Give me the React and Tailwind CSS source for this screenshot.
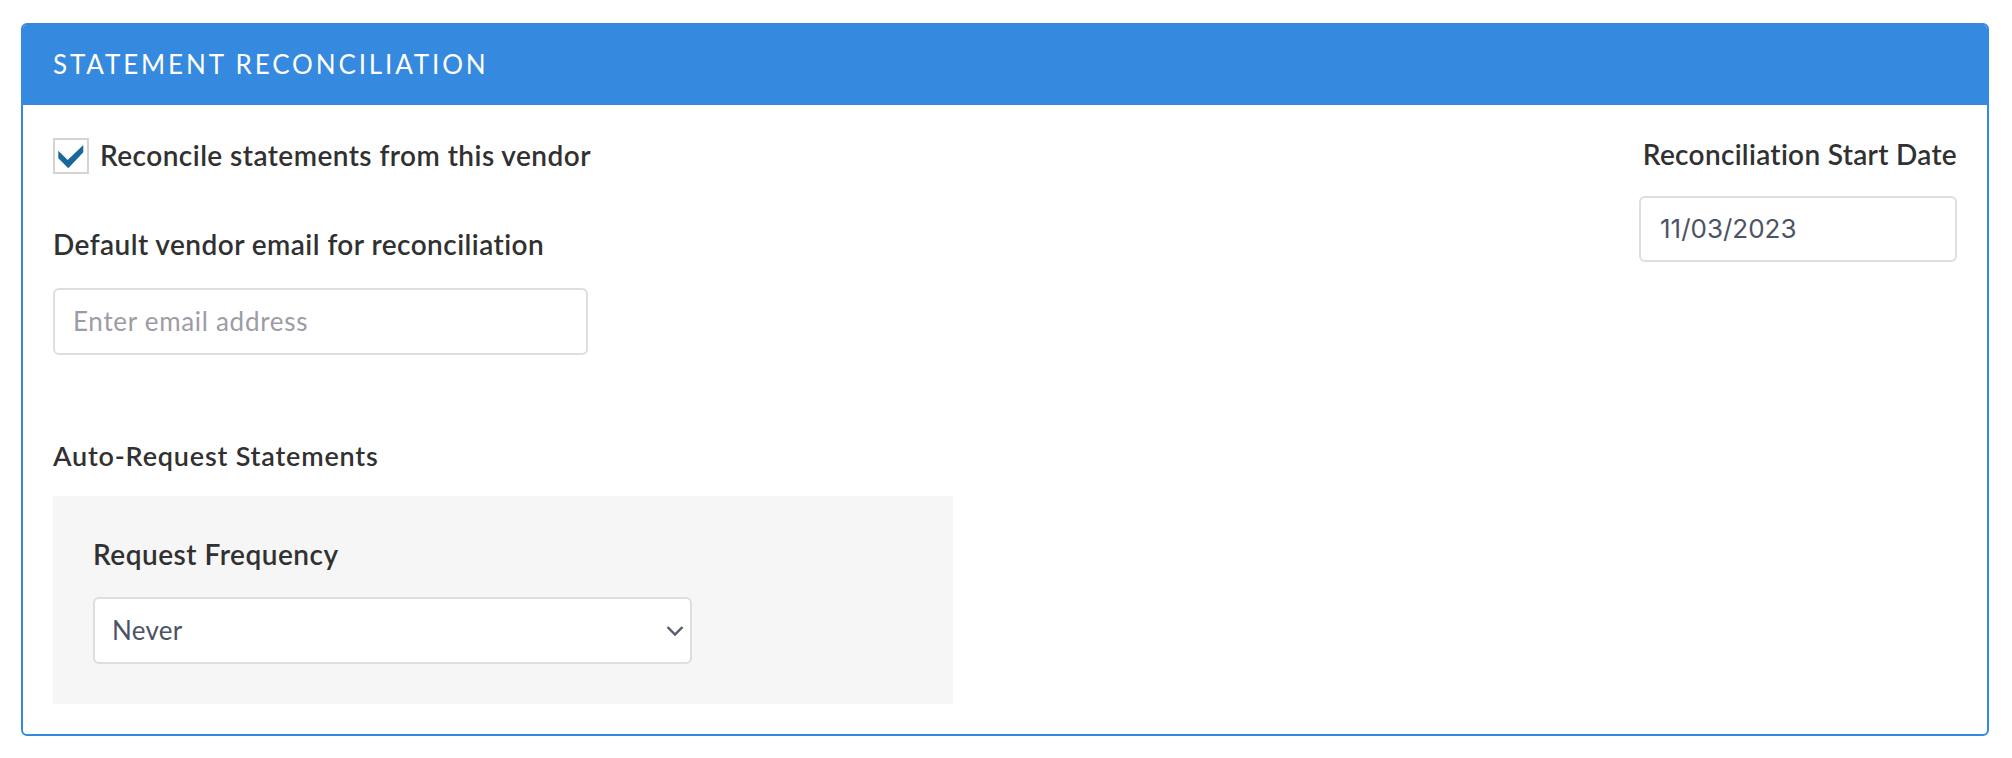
import React from "react";

function Check() {
  return (
    <svg width="32" height="32" viewBox="0 0 32 32" className="block">
      <polygon
        points="3.3,10.7 12.7,20 28.3,5 28.3,12.3 13.3,28.3 3.3,18.3"
        fill="#1a689b"
      />
    </svg>
  );
}

function Chevron() {
  return (
    <svg width="18" height="12" viewBox="0 0 18 12" className="block">
      <polyline points="1.5,2 9,9.5 16.5,2" fill="none" stroke="#555b6b" strokeWidth="2.4" />
    </svg>
  );
}

export default function App() {
  const font = { fontFamily: "Lato, 'Noto Sans', sans-serif" };
  return (
    <div className="w-[2012px] h-[758px] bg-white pt-[23px]" style={font}>
      <div className="ml-[21px] w-[1968px] rounded-[6px] border-2 border-[#3589de] overflow-hidden">
        <div className="h-[80px] bg-[#3589de] flex items-center pl-[30px]">
          <span className="text-white text-[26px] tracking-[0.11em] leading-[1.2]">STATEMENT RECONCILIATION</span>
        </div>
        <div className="flex justify-between pl-[30px] pr-[30px] pt-[33px] pb-[30px] text-[#313131]">
          <div className="flex flex-col">
            <div className="flex items-center gap-[11px]">
              <div className="w-[36px] h-[36px] border-2 border-[#d4d4d4] bg-white flex items-center justify-center">
                <Check />
              </div>
              <span className="text-[28px] font-semibold leading-[1.2] tracking-[0.45px]">Reconcile statements from this vendor</span>
            </div>
            <div className="mt-[54px] text-[28px] font-semibold leading-[1.2] tracking-[0.45px]">Default vendor email for reconciliation</div>
            <div className="mt-[26px] w-[535px] h-[67px] rounded-[6px] border-2 border-[#dddde3] flex items-center pl-[18px]">
              <span className="text-[26px] text-[#9d9ca6] tracking-[0.7px]">Enter email address</span>
            </div>
            <div className="mt-[85px] text-[27px] font-semibold leading-[1.15] tracking-[0.8px]">Auto-Request Statements</div>
            <div className="mt-[25px] w-[900px] bg-[#f6f6f6] pl-[40px] pt-[42px] pb-[40px]">
              <div className="text-[28px] font-semibold leading-[1.2] tracking-[0.5px]">Request Frequency</div>
              <div className="mt-[26px] w-[599px] h-[67px] rounded-[6px] border-2 border-[#dddde3] bg-white flex items-center justify-between pl-[17px] pr-[6px]">
                <span className="text-[26px] text-[#4d5366] tracking-[0.3px]">Never</span>
                <Chevron />
              </div>
            </div>
          </div>
          <div className="flex flex-col items-end">
            <div className="text-[28px] font-semibold leading-[1.2] tracking-[0.3px]">Reconciliation Start Date</div>
            <div className="mt-[24px] w-[318px] h-[66px] rounded-[6px] border-2 border-[#dddde3] flex items-center pl-[19px]">
              <span className="text-[26px] text-[#4d5366]" style={{ fontFamily: "Inter, 'Liberation Sans', sans-serif" }}>11/03/2023</span>
            </div>
          </div>
        </div>
      </div>
    </div>
  );
}
